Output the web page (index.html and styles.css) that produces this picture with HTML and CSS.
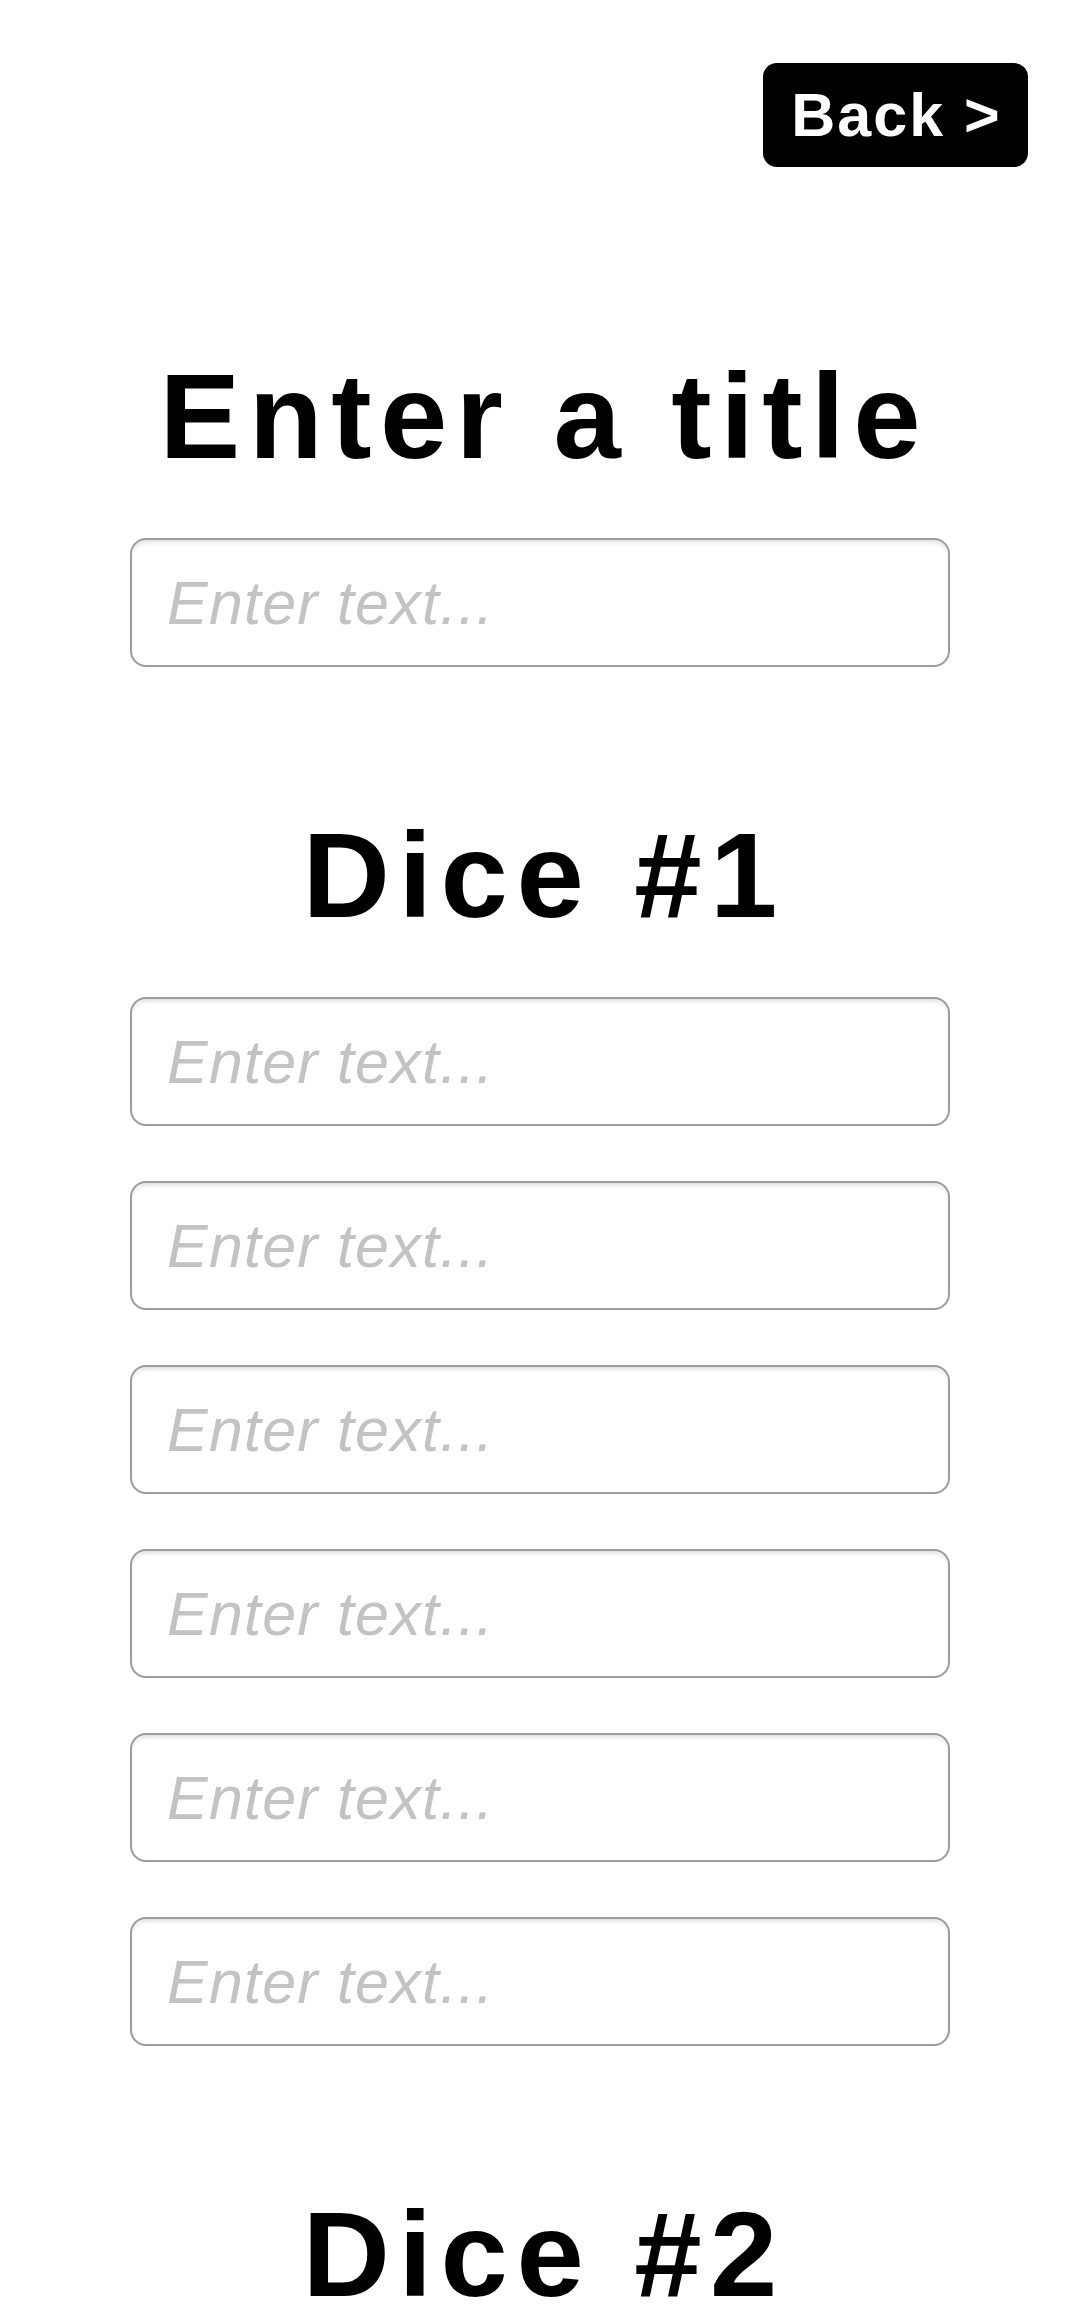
FILE: index.html
```html
<!DOCTYPE html>
<html lang="en">
<head>
<meta charset="utf-8">
<title>Dice setup</title>
<link rel="stylesheet" href="styles.css">
</head>
<body>
<header class="topbar">
  <button class="back-btn" type="button">Back &gt;</button>
</header>
<main class="form">
  <section class="group group-title">
    <h1 class="heading">Enter a title</h1>
    <input class="field" type="text" placeholder="Enter text...">
  </section>
  <section class="group">
    <h2 class="heading">Dice #1</h2>
    <input class="field" type="text" placeholder="Enter text...">
    <input class="field" type="text" placeholder="Enter text...">
    <input class="field" type="text" placeholder="Enter text...">
    <input class="field" type="text" placeholder="Enter text...">
    <input class="field" type="text" placeholder="Enter text...">
    <input class="field" type="text" placeholder="Enter text...">
  </section>
  <section class="group">
    <h2 class="heading">Dice #2</h2>
    <input class="field" type="text" placeholder="Enter text...">
    <input class="field" type="text" placeholder="Enter text...">
  </section>
</main>
</body>
</html>
```
FILE: styles.css
```css
html, body {
  margin: 0;
  padding: 0;
  background: #ffffff;
}

body {
  font-family: "Liberation Sans", Arial, sans-serif;
  color: #000000;
}

.topbar {
  display: flex;
  justify-content: flex-end;
  padding: 63px 52px 0 0;
}

.back-btn {
  width: 265px;
  height: 104px;
  background: #000000;
  color: #ffffff;
  border: none;
  border-radius: 14px;
  font-family: "Liberation Sans", Arial, sans-serif;
  font-weight: bold;
  font-size: 61px;
  letter-spacing: 2px;
  padding: 0 0 0 2px;
  line-height: 1;
  cursor: pointer;
}

.form {
  display: flex;
  flex-direction: column;
  align-items: center;
  gap: 148px;
  padding-top: 189px;
}

.group {
  display: flex;
  flex-direction: column;
  align-items: center;
  gap: 55px;
}

.heading {
  margin: 0 0 6px 0;
  font-family: "Liberation Sans", Arial, sans-serif;
  font-weight: bold;
  font-size: 121px;
  line-height: 121px;
  letter-spacing: 8.5px;
  padding-left: 8.5px;
  text-align: center;
}

.field {
  box-sizing: border-box;
  width: 820px;
  height: 129px;
  margin: 0;
  padding: 0 20px 0 35px;
  border: 2px solid #9d9d9d;
  border-radius: 16px;
  background: #ffffff;
  box-shadow: inset 0 4px 5px -2px rgba(0, 0, 0, 0.14);
  font-family: "Liberation Sans", Arial, sans-serif;
  font-style: italic;
  font-size: 61px;
  letter-spacing: 1.2px;
  color: #333333;
  outline: none;
}

.field::placeholder {
  color: #c3c3c3;
  opacity: 1;
}
```
